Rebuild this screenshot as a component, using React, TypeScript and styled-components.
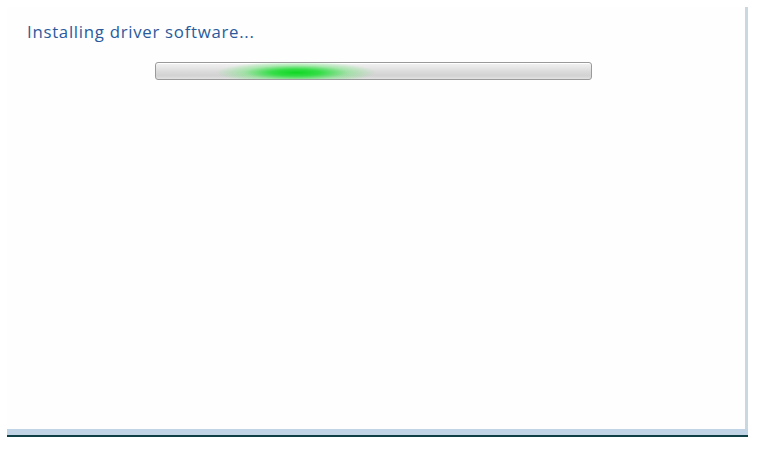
import styled, { createGlobalStyle } from 'styled-components';

const Global = createGlobalStyle`
  html, body {
    margin: 0;
    padding: 0;
    background: #ffffff;
  }
  #root {
    width: 762px;
    height: 450px;
    overflow: hidden;
  }
`;

const Page = styled.div`
  width: 762px;
  height: 450px;
  background: #ffffff;
  padding: 7px 0 0 7px;
  box-sizing: border-box;
`;

const Panel = styled.div`
  width: 741px;
  height: 430px;
  display: flex;
  flex-direction: column;
  box-sizing: border-box;
`;

const Body = styled.div`
  flex: 1;
  display: flex;
  flex-direction: column;
  border-right: 3px solid #c9d7df;
  background: #fefefe;
  padding: 13px 0 0 20px;
`;

const Title = styled.div`
  font-family: 'Open Sans', 'Noto Sans', sans-serif;
  font-size: 16.8px;
  line-height: 23px;
  color: #2a5a9c;
  letter-spacing: 0.72px;
`;

const Track = styled.div`
  position: relative;
  margin: 19px 0 0 128px;
  width: 437px;
  height: 18px;
  box-sizing: border-box;
  border: 1px solid #9a9a9a;
  border-radius: 3px;
  overflow: hidden;
  background: linear-gradient(
    to bottom,
    #f3f3f3 0%,
    #e6e6e6 30%,
    #dadada 55%,
    #d2d2d2 80%,
    #e2e2e2 100%
  );
  box-shadow: inset 0 1px 0 #ffffff;
`;

const Glow = styled.div<{ $left: number }>`
  position: absolute;
  top: 0;
  bottom: 0;
  left: ${(p) => p.$left}px;
  width: 160px;
  background: radial-gradient(
    ellipse 50% 70% at 50% 60%,
    rgba(15, 215, 35, 1) 0%,
    rgba(35, 222, 55, 0.9) 30%,
    rgba(110, 232, 120, 0.5) 65%,
    rgba(200, 245, 200, 0) 100%
  );
`;

const Footer = styled.div`
  height: 6px;
  background: #c0d4e6;
  border-bottom: 2px solid #0f3e44;
`;

export default function App() {
  return (
    <>
      <Global />
      <Page>
        <Panel>
          <Body>
            <Title>Installing driver software...</Title>
            <Track>
              <Glow $left={60} />
            </Track>
          </Body>
          <Footer />
        </Panel>
      </Page>
    </>
  );
}
